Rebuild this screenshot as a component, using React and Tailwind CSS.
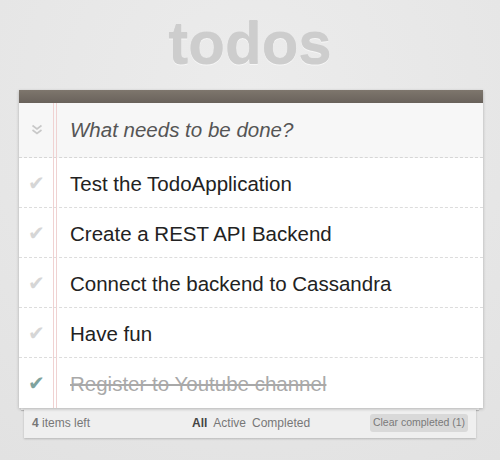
export default function App() {
  const items = [
    { t: "Test the TodoApplication", done: false },
    { t: "Create a REST API Backend", done: false },
    { t: "Connect the backend to Cassandra", done: false },
    { t: "Have fun", done: false },
    { t: "Register to Youtube channel", done: true },
  ];
  return (
    <div className="w-[500px] h-[460px] overflow-hidden bg-[#e6e6e6] bg-[radial-gradient(circle_at_50%_20%,#ececec,#e2e2e2)] font-['Liberation_Sans',Arial,sans-serif]">
      <div className="h-[90px] flex justify-center">
        <h1 className="mt-[14px] text-[60px] leading-[60px] font-bold text-[#cdcdcd] [text-shadow:0_-1px_0_rgba(0,0,0,0.12),0_1px_0_rgba(255,255,255,0.6)]">
          todos
        </h1>
      </div>
      <div className="mx-[19px] w-[464px] relative shadow-[0_1px_3px_rgba(0,0,0,0.25)] bg-white">
        <div className="h-[13px] bg-[linear-gradient(#7e766d,#69625b)]" />
        <div className="relative">
          <div className="absolute left-[34px] top-0 bottom-0 w-[4px] border-l border-r border-[#f0d2d2] pointer-events-none z-10" />
          <div className="h-[55px] flex items-center bg-[#f7f7f7] border-b border-dashed border-[#d6d6d6]">
            <div className="w-[35px] flex justify-center">
              <svg width="12" height="12" viewBox="0 0 12 12" className="ml-[1px]">
                <path d="M1.5 1.5 L6 5 L10.5 1.5" fill="none" stroke="#c8c8c8" strokeWidth="1.6" />
                <path d="M1.5 6 L6 9.5 L10.5 6" fill="none" stroke="#c8c8c8" strokeWidth="1.6" />
              </svg>
            </div>
            <div className="pl-[16px] text-[20.5px] italic text-[#555] mt-[1px]">What needs to be done?</div>
          </div>
          {items.map((it, i) => (
            <div
              key={i}
              className={`h-[50px] flex items-center ${i < items.length - 1 ? "border-b border-dashed border-[#dcdcdc]" : ""}`}
            >
              <div className={`w-[35px] flex justify-center text-[20px] ${it.done ? "text-[#7fa39e]" : "text-[#d6d6d6]"} font-['DejaVu_Sans',sans-serif]`}>
                ✔
              </div>
              <div className={`pl-[16px] mt-[3px] text-[20.5px] ${it.done ? "text-[#a9a9a9] line-through" : "text-[#222]"}`}>
                {it.t}
              </div>
            </div>
          ))}
        </div>
      </div>
      <div className="mx-[21px] h-[2px] bg-[#f6f6f6] shadow-[0_1px_1px_rgba(0,0,0,0.2)]" />
      <div className="mx-[24px] -mt-[2px] h-[30px] flex items-center bg-[#efefef] shadow-[0_1px_2px_rgba(0,0,0,0.2)] text-[12px] text-[#777] px-[8px]">
        <div className="w-[150px]">
          <span className="font-bold">4</span> items left
        </div>
        <div className="flex-1 flex justify-start gap-[6px] ml-[10px]">
          <span className="font-bold text-[#444]">All</span>
          <span>Active</span>
          <span>Completed</span>
        </div>
        <div className="w-[130px] flex justify-end">
          <div className="h-[18px] w-[98px] mr-[0px] rounded-[3px] bg-[#d9d9d9] text-[10.5px] flex items-center justify-center text-[#7a7a7a]">
            Clear completed (1)
          </div>
        </div>
      </div>
    </div>
  );
}
